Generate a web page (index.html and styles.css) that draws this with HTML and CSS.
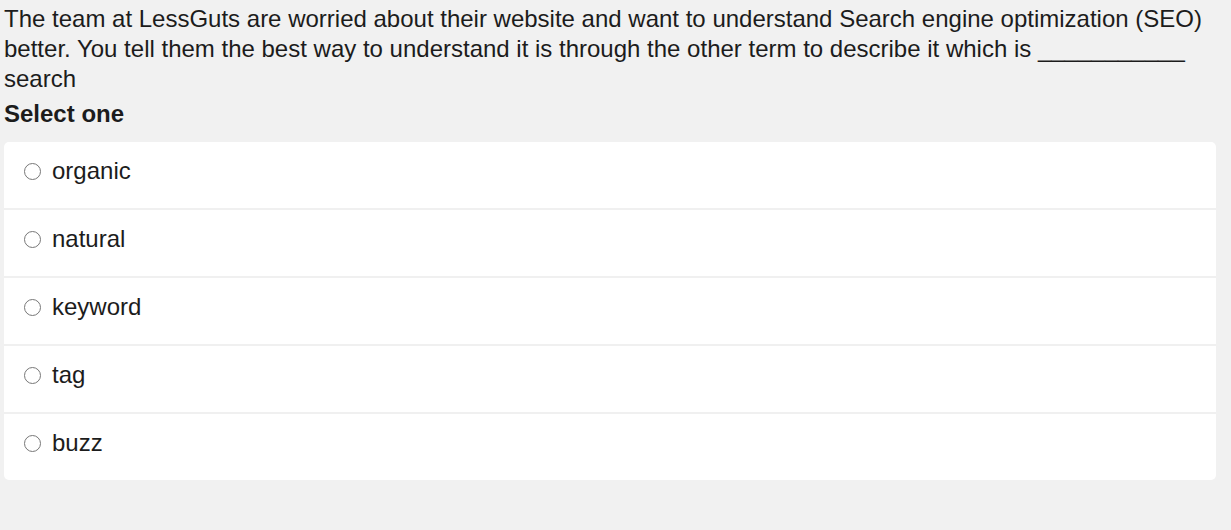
FILE: index.html
```html
<!DOCTYPE html>
<html>
<head>
<meta charset="utf-8">
<link rel="stylesheet" href="styles.css">
</head>
<body>
<div class="page">
  <p class="question">The team at LessGuts are worried about their website and want to understand Search engine optimization (SEO) better. You tell them the best way to understand it is through the other term to describe it which is ___________ search</p>
  <div class="prompt">Select one</div>
  <div class="card">
    <label class="option"><span class="radio"></span><span class="label">organic</span></label>
    <label class="option"><span class="radio"></span><span class="label">natural</span></label>
    <label class="option"><span class="radio"></span><span class="label">keyword</span></label>
    <label class="option"><span class="radio"></span><span class="label">tag</span></label>
    <label class="option"><span class="radio"></span><span class="label">buzz</span></label>
  </div>
</div>
</body>
</html>
```
FILE: styles.css
```css
html, body {
  margin: 0;
  padding: 0;
  background: #f1f1f1;
}
body {
  font-family: "Liberation Sans", Arial, sans-serif;
  color: #1c1c1c;
  height: 530px;
  overflow: hidden;
}
.page {
  padding: 4px 15px 0 4px;
}
.question {
  margin: 0;
  font-size: 24px;
  line-height: 30px;
}
.prompt {
  font-size: 24px;
  font-weight: bold;
  line-height: 30px;
  margin-top: 5px;
  margin-bottom: 13px;
}
.card {
  background: #ffffff;
  border-radius: 5px;
}
.option {
  display: flex;
  align-items: center;
  box-sizing: content-box;
  height: 56px;
  padding: 1px 0 9px 20px;
  border-top: 2px solid #f0f0f0;
  font-size: 24px;
}
.option:first-child {
  border-top: none;
}
.radio {
  width: 17px;
  height: 17px;
  border: 1.3px solid #777777;
  border-radius: 50%;
  box-sizing: border-box;
  margin-right: 11px;
  flex: none;
}
```
